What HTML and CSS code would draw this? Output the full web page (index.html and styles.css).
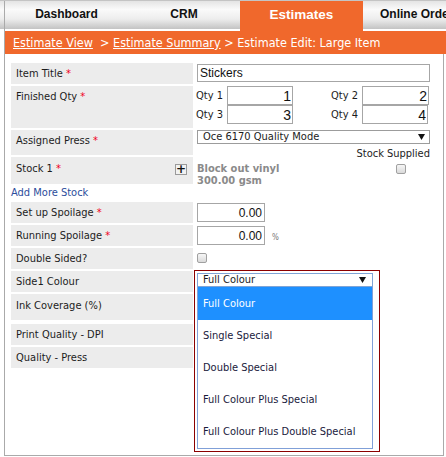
FILE: index.html
```html
<!DOCTYPE html>
<html lang="en">
<head>
  <meta charset="UTF-8" />
  <title>Estimate Edit: Large Item</title>
  <link rel="stylesheet" href="styles.css">
</head>
<body>
  <div class="tabs">
    <div class="tab tab-dash">Dashboard</div>
    <div class="tab tab-crm">CRM</div>
    <div class="tab tab-est active">Estimates</div>
    <div class="tab tab-online">Online Orders</div>
  </div>

  <div class="crumbs">
    <a href="#">Estimate View</a>&nbsp; &gt; <a href="#">Estimate Summary</a> &gt; Estimate Edit: Large Item
  </div>

  <div class="content">
    <div class="form">
      <div class="label">Item Title <span class="req">*</span></div>
      <div class="value"><input class="text wide" type="text" value="Stickers" /></div>

      <div class="label h42">Finished Qty <span class="req">*</span></div>
      <div class="value qty-grid">
        <div class="qty"><span>Qty 1</span><input class="num" type="text" value="1" /></div>
        <div class="qty"><span>Qty 2</span><input class="num" type="text" value="2" /></div>
        <div class="qty"><span>Qty 3</span><input class="num" type="text" value="3" /></div>
        <div class="qty"><span>Qty 4</span><input class="num" type="text" value="4" /></div>
      </div>

      <div class="label h25">Assigned Press <span class="req">*</span></div>
      <div class="value press-stock">
        <div class="select wide">
          <span>Oce 6170 Quality Mode</span>
          <svg width="7" height="6" viewBox="0 0 7 6"><path d="M0 0h7L3.5 6z" fill="#111"/></svg>
        </div>
        <div class="stock">
          <div class="stock-name">Block out vinyl<br>300.00 gsm</div>
          <div class="stock-supplied">
            <div>Stock Supplied</div>
            <span class="cb"></span>
          </div>
        </div>
      </div>

      <div class="label h27 stock-label">
        <span>Stock 1 <span class="req">*</span></span>
        <span class="plus">+</span>
      </div>

      <div class="add-stock"><a href="#">Add More Stock</a></div>

      <div class="label">Set up Spoilage <span class="req">*</span></div>
      <div class="value"><input class="text small" type="text" value="0.00" /></div>

      <div class="label">Running Spoilage <span class="req">*</span></div>
      <div class="value"><input class="text small" type="text" value="0.00" /><span class="pct">%</span></div>

      <div class="label">Double Sided?</div>
      <div class="value"><span class="cb cb-double"></span></div>

      <div class="label">Side1 Colour</div>
      <div class="value colour-cell">
        <div class="dropdown">
          <div class="dd-select">
            <span>Full Colour</span>
            <svg width="7" height="6" viewBox="0 0 7 6"><path d="M0 0h7L3.5 6z" fill="#111"/></svg>
          </div>
          <ul class="dd-list">
            <li class="selected">Full Colour</li>
            <li>Single Special</li>
            <li>Double Special</li>
            <li>Full Colour Plus Special</li>
            <li>Full Colour Plus Double Special</li>
          </ul>
        </div>
      </div>

      <div class="label h26 gap-after">Ink Coverage (%)</div>
      <div class="value"></div>

      <div class="label">Print Quality - DPI</div>
      <div class="value"></div>

      <div class="label">Quality - Press</div>
      <div class="value"></div>
    </div>
  </div>
</body>
</html>
```

FILE: styles.css
```css
body {
  margin: 0;
  font-family: "DejaVu Sans Condensed", "DejaVu Sans", sans-serif;
  font-size: 11px;
  color: #1c1c1c;
  background: #fff;
  overflow: hidden;
}
.tabs {
  display: flex;
  height: 30px;
  padding-left: 4px;
  border-top: 1px solid #c4c4c4;
  white-space: nowrap;
  background: linear-gradient(to bottom, #e4e4e4 0, #fafafa 28%, #ededed 60%, #c3c3c3 calc(100% - 2px), #fff calc(100% - 2px));
}
.tab {
  flex: none;
  height: 26px;
  padding-bottom: 4px;
  display: flex;
  align-items: center;
  justify-content: center;
  font: bold 12px "Liberation Sans", Arial, sans-serif;
  color: #111;
}
.tab-dash {
  width: 123px;
  border-left: 1px solid #aaa;
}
.tab-crm {
  width: 112px;
}
.tab-est {
  width: 123px;
}
.tab-online {
  width: 114px;
}
.tab.active {
  background: #f0682c;
  color: #fff;
  font-size: 13.5px;
  height: 27px;
  padding-bottom: 3px;
}
.crumbs {
  margin-left: 4px;
  border-left: 1px solid #aaa;
  height: 23px;
  line-height: 23px;
  padding-left: 8px;
  background: #f0682c;
  color: #fff;
  font-size: 12.5px;
  white-space: nowrap;
}
.crumbs a {
  color: #fff;
}
.content {
  margin-left: 4px;
  width: 426px;
  height: 392px;
  padding: 9px 6px 0;
  border: 1px solid #aaa;
  border-top: 0;
}
.form {
  display: grid;
  grid-template-columns: 182px 233px;
  column-gap: 4px;
  row-gap: 2px;
  align-items: start;
}
.label {
  box-sizing: border-box;
  height: 21px;
  padding: 4px 5px;
  line-height: 13px;
  background: #ececec;
}
.label.h42 { height: 42px; }
.label.h25 { height: 25px; }
.label.h27 { height: 27px; padding-top: 5px; }
.label.h26 { height: 26px; padding-top: 5px; }
.gap-after {
  margin-bottom: 2px;
}
.req {
  color: #f0001c;
}
.text {
  box-sizing: border-box;
  display: block;
  margin: 1px 0 0;
  height: 18px;
  padding: 0 2px;
  border: 1px solid #a6a6a6;
  font: 12px "Liberation Sans", Arial, sans-serif;
  color: #111;
  outline: none;
}
.text.wide {
  width: 233px;
}
.text.small {
  display: inline-block;
  width: 68px;
  height: 19px;
  text-align: right;
  vertical-align: top;
}
.pct {
  display: inline-block;
  margin: 8px 0 0 7px;
  font-size: 8px;
  color: #777;
  vertical-align: top;
}
.qty-grid {
  display: grid;
  grid-template-columns: 135px 98px;
}
.qty {
  display: flex;
  align-items: center;
  height: 19px;
}
.qty span {
  width: 30px;
  margin-left: -1px;
  padding-right: 1px;
}
.num {
  box-sizing: border-box;
  width: 66px;
  height: 19px;
  margin: 0;
  padding: 0 1px 0 2px;
  border: 1px solid #a6a6a6;
  text-align: right;
  font: 14px "Liberation Sans", Arial, sans-serif;
  color: #111;
  outline: none;
}
.qty:nth-child(2) .num {
  width: 67px;
}
.press-stock {
  grid-row: span 2;
  height: 54px;
}
.select {
  box-sizing: border-box;
  height: 14px;
  display: flex;
  align-items: center;
  justify-content: space-between;
  padding: 0 4px 0 5px;
  border: 1px solid #9c9c9c;
  line-height: 12px;
}
.stock {
  display: flex;
  justify-content: space-between;
  align-items: flex-start;
  margin-top: 3px;
}
.stock-name {
  padding-top: 16px;
  font-weight: bold;
  color: #8a8a8a;
  line-height: 12px;
}
.stock-supplied {
  line-height: 13px;
  text-align: right;
}
.stock-supplied .cb {
  margin: 4px 24px 0 0;
}
.cb {
  box-sizing: border-box;
  display: inline-block;
  width: 10px;
  height: 10px;
  border: 1px solid #a0a0a0;
  border-radius: 2px;
  background: linear-gradient(#f6f6f6, #dadada);
  vertical-align: top;
}
.cb-double {
  margin-top: 5px;
}
.stock-label {
  grid-column: 1;
  display: flex;
  justify-content: space-between;
  align-items: flex-start;
}
.plus {
  box-sizing: border-box;
  width: 12px;
  height: 11px;
  margin: 2px 1px 0 0;
  border: 1px solid #9a9a9a;
  background: #f2f2f2;
  font: bold 12px/9px "DejaVu Sans", sans-serif;
  text-align: center;
  color: #111;
}
.add-stock {
  grid-column: 1 / span 2;
  height: 14px;
  line-height: 14px;
}
.add-stock a {
  color: #2c4d9c;
  text-decoration: none;
}
.colour-cell {
  position: relative;
  height: 21px;
}
.dropdown {
  position: absolute;
  left: -3px;
  top: -1px;
  z-index: 2;
  box-sizing: border-box;
  width: 186px;
  padding: 2px 6px 2px 2px;
  border: 1px solid #8b0000;
  background: #fff;
}
.dd-select {
  box-sizing: border-box;
  height: 14px;
  display: flex;
  align-items: center;
  justify-content: space-between;
  padding: 0 6px 0 5px;
  border: 1px solid #7fa4d6;
  line-height: 12px;
}
.dd-list {
  list-style: none;
  margin: 0;
  padding: 0;
  border: 1px solid #80a0d8;
  border-top: 0;
}
.dd-list li {
  height: 32px;
  line-height: 32px;
  padding-left: 5px;
  color: #1a1a3c;
}
.dd-list li.selected {
  height: 33px;
  line-height: 33px;
  background: #1e90ff;
  color: #fff;
}
```
